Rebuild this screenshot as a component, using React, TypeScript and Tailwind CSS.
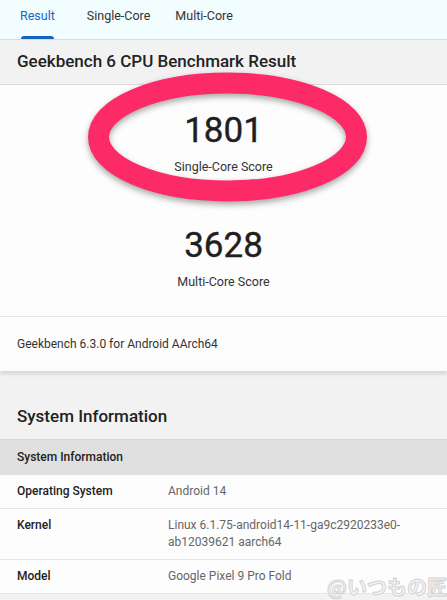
export default function App() {
  return (
    <div className="relative h-[600px] w-[447px] overflow-hidden bg-[#f2f2f2] font-['Roboto',sans-serif] text-[#222]">
      <nav className="flex h-[39px] items-stretch bg-[#f1fdfe] px-[20px] text-[12.5px]">
        <div className="relative flex items-center pb-[7px] text-[#1565c0]">
          Result
          <span className="absolute bottom-0 left-[1px] right-[1px] h-[3px] rounded-t bg-[#1565c0]" />
        </div>
        <div className="ml-[32px] flex items-center pb-[7px] text-[#333]">Single-Core</div>
        <div className="ml-[25px] flex items-center pb-[7px] text-[#333]">Multi-Core</div>
      </nav>

      <div className="flex h-[46px] items-center border-y border-[#dcdcdc] bg-[#f2f2f2] px-[17px]">
        <h1 className="text-[17px] font-medium text-[#222]">Geekbench 6 CPU Benchmark Result</h1>
      </div>

      <section className="bg-[#fdfdfd] shadow-[0_3px_4px_rgba(0,0,0,0.12)]">
        <div className="flex flex-col items-center pt-[26px]">
          <div className="text-[35px] leading-[40px] text-[#1f1f1f] [-webkit-text-stroke:0.4px_#1f1f1f]">1801</div>
          <div className="mt-[7px] text-[12.5px] text-[#333]">Single-Core Score</div>
          <div className="mt-[49px] text-[35px] leading-[40px] text-[#1f1f1f] [-webkit-text-stroke:0.4px_#1f1f1f]">3628</div>
          <div className="mt-[7px] text-[12.5px] text-[#333]">Multi-Core Score</div>
        </div>
        <div className="mt-[24px] border-t border-[#e6e6e6] px-[17px] py-[18px] text-[12px] leading-[18px] text-[#333]">
          Geekbench 6.3.0 for Android AArch64
        </div>
      </section>

      <h2 className="px-[17px] pb-[12px] pt-[34px] text-[17px] font-medium leading-[22px] text-[#222]">System Information</h2>

      <div className="border-t border-[#d6d6d6] bg-[#e0e0e0] px-[17px] py-[9px] text-[12px] font-medium leading-[17px]">
        System Information
      </div>
      <div className="bg-[#fdfdfd] text-[12px] leading-[17px]">
        <Row label="Operating System" value="Android 14" />
        <Row label="Kernel" value="Linux 6.1.75-android14-11-ga9c2920233e0-ab12039621 aarch64" />
        <Row label="Model" value="Google Pixel 9 Pro Fold" />
      </div>

      <svg
        className="pointer-events-none absolute left-[78px] top-[62px] [filter:drop-shadow(0_3px_3px_rgba(0,0,0,0.35))]"
        width="300"
        height="152"
        viewBox="0 0 300 152"
      >
        <ellipse cx="149.5" cy="75" rx="129" ry="54" fill="none" stroke="#fc2a67" strokeWidth="21" />
      </svg>

      <div className="absolute bottom-[3px] right-0 font-['Noto_Sans_CJK_JP',sans-serif] text-[20px] font-bold leading-none text-[#f6f6f6] [-webkit-text-stroke:1px_#d2d2d2]">
        @いつもの匠
      </div>
    </div>
  );
}

function Row(props: { label: string; value: string }) {
  return (
    <div className="flex border-b border-[#e6e6e6] px-[17px] py-[8px]">
      <div className="w-[151px] shrink-0 font-medium text-[#222]">{props.label}</div>
      <div className="w-[250px] text-[#666]">{props.value}</div>
    </div>
  );
}
